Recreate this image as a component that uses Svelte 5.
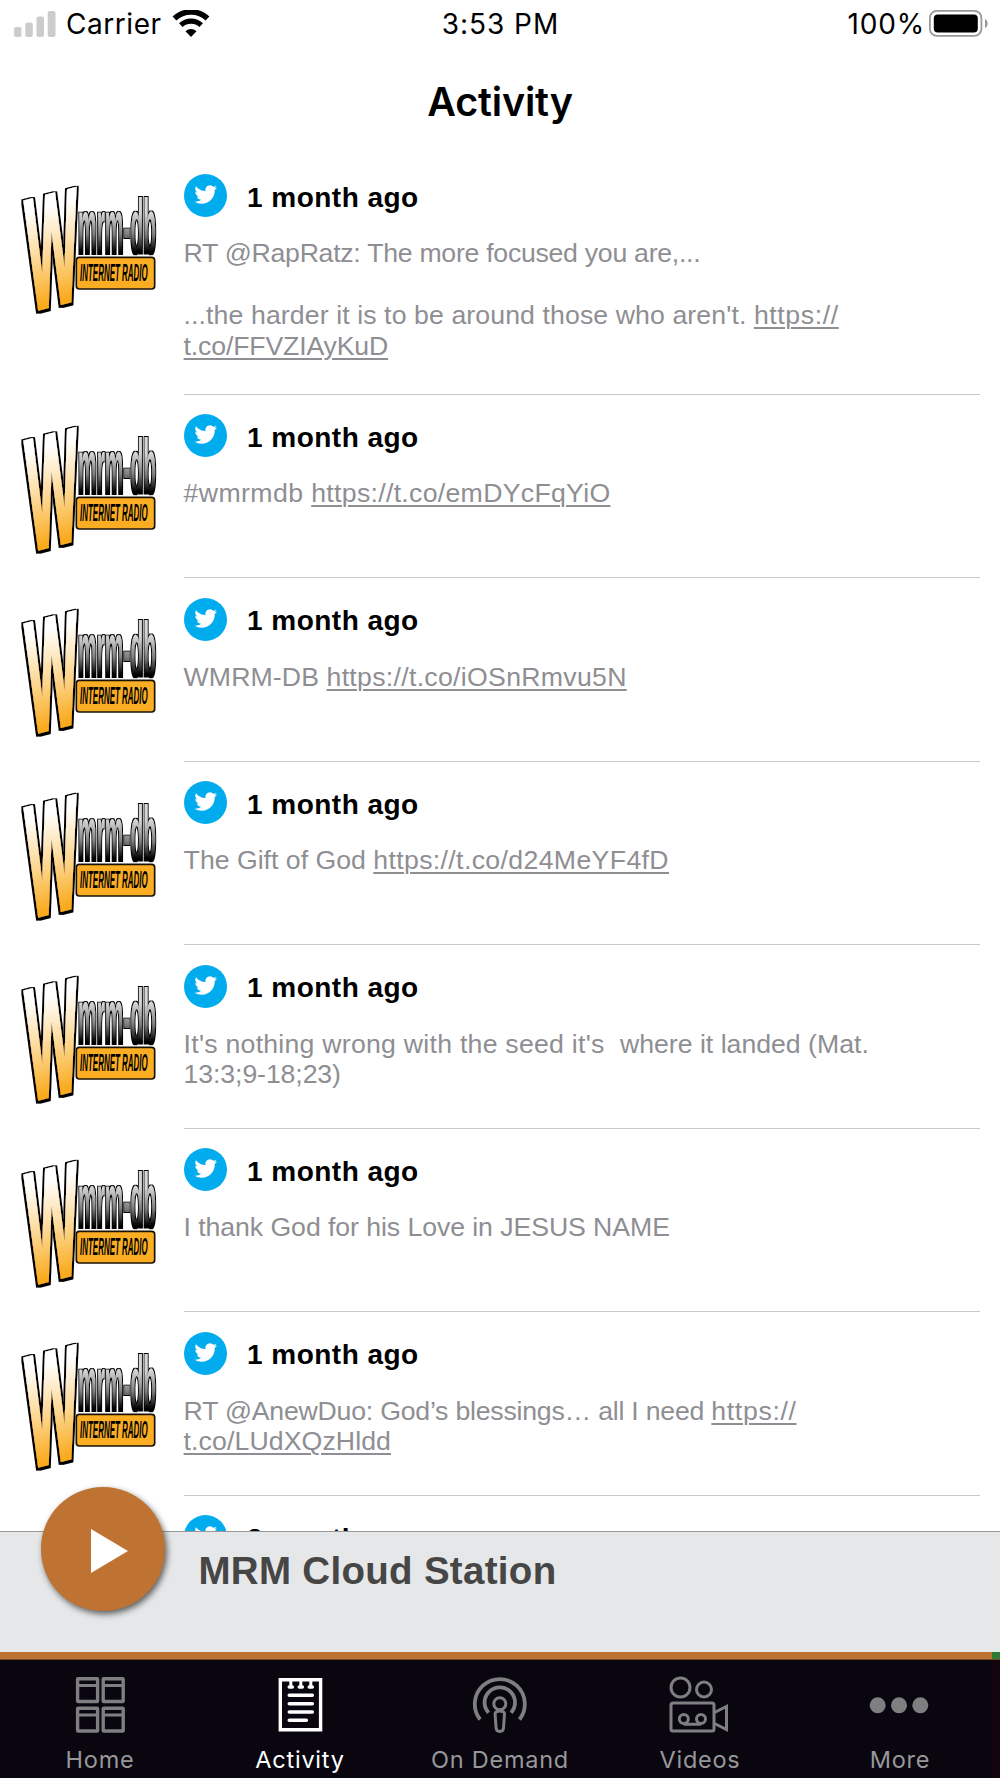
<script lang="ts">
	type Segment = { text: string; link?: boolean; tracking: number };
	type Post = { age: string; lines: Segment[][]; tall?: boolean };

	const posts: Post[] = [
		{
			age: '1 month ago',
			lines: [
				[{ text: 'RT @RapRatz: The more focused you are,...', tracking: -0.27 }],
				[],
				[
					{ text: "...the harder it is to be around those who aren't. ", tracking: 0.1 },
					{ text: 'https://', link: true, tracking: 0.6 }
				],
				[{ text: 't.co/FFVZIAyKuD', link: true, tracking: -0.16 }]
			],
			tall: true
		},
		{
			age: '1 month ago',
			lines: [
				[
					{ text: '#wmrmdb ', tracking: 0.4 },
					{ text: 'https://t.co/emDYcFqYiO', link: true, tracking: 0.3 }
				]
			]
		},
		{
			age: '1 month ago',
			lines: [
				[
					{ text: 'WMRM-DB ', tracking: 0.1 },
					{ text: 'https://t.co/iOSnRmvu5N', link: true, tracking: 0.3 }
				]
			]
		},
		{
			age: '1 month ago',
			lines: [
				[
					{ text: 'The Gift of God ', tracking: 0 },
					{ text: 'https://t.co/d24MeYF4fD', link: true, tracking: 0.36 }
				]
			]
		},
		{
			age: '1 month ago',
			lines: [
				[
					{ text: "It's nothing wrong with the seed it's  ", tracking: 0.25 },
					{ text: 'where it landed (Mat.', tracking: 0 }
				],
				[{ text: '13:3;9-18;23)', tracking: -0.1 }]
			]
		},
		{
			age: '1 month ago',
			lines: [[{ text: 'I thank God for his Love in JESUS NAME', tracking: -0.07 }]]
		},
		{
			age: '1 month ago',
			lines: [
				[
					{ text: 'RT @AnewDuo: God’s blessings… all I need ', tracking: -0.22 },
					{ text: 'https://', link: true, tracking: 0.65 }
				],
				[{ text: 't.co/LUdXQzHldd', link: true, tracking: 0.1 }]
			]
		},
		{ age: '2 months ago', lines: [] }
	];

	const tabs = ['Home', 'Activity', 'On Demand', 'Videos', 'More'];
	let active = $state('Activity');
</script>

{#snippet logo()}
	<svg class="logo" viewBox="0 0 480 495" aria-label="WMRM-DB Internet Radio">
		<g filter="url(#outline-thin)">
			<text transform="translate(204 268) scale(1 2.36)" font-size="100" textLength="234" lengthAdjust="spacingAndGlyphs" fill="url(#steel)">mrm-db</text>
		</g>
		<g filter="url(#outline-thick)">
			<text
				transform="matrix(1.64 -0.42 0.2 4.72 57 437)"
				font-size="100"
				textLength="94"
				lengthAdjust="spacingAndGlyphs"
				fill="url(#gold)"
				stroke="url(#gold)"
				stroke-width="3">W</text
			>
		</g>
		<rect x="199" y="277" width="235" height="95" rx="9" fill="#fbae24" stroke="#1a1206" stroke-width="5" />
		<text class="tagline" x="210" y="348" font-size="73" textLength="203" lengthAdjust="spacingAndGlyphs">INTERNET RADIO</text>
	</svg>
{/snippet}

{#snippet tabIcon(name: string)}
	<svg class="tab-icon" viewBox="0 0 64 60" fill="none" stroke="currentColor" stroke-width="3">
		{#if name === 'Home'}
			{#each [[9.6, 4.7], [35.2, 4.7], [9.6, 34.2], [35.2, 34.2]] as [x, y]}
				<rect {x} {y} width="20" height="22.8" rx="0.6" stroke-width="3.4" />
				<path d="M{x} {y + 6.8}h20" stroke-width="3" />
			{/each}
		{:else if name === 'Activity'}
			<path d="M12.3 5.7h40.3v50H12.3z" stroke-width="3.4" />
			<path d="M22.8 6v6M32.8 6v6M42.8 6v6" stroke-width="3" />
			<path d="M21.3 13h3M31.3 13h3M41.3 13h3M21.3 21.3h23M21.3 29.7h23M21.3 38h23M21.3 46.3h17" stroke-width="3.6" stroke-linecap="round" />
		{:else if name === 'On Demand'}
			<path d="M12.1 45.5a25 25 0 1 1 39.4 0M20.5 38.7a15.2 15.2 0 1 1 22.6 0" stroke-width="3.8" />
			<circle cx="31.8" cy="29.7" r="6" />
			<path d="M27.1 40c0-2 1-3 4.700-3s4.700 1 4.700 3l-1 14c-.2 2.500-1.500 3.500-3.700 3.500s-3.500-1-3.700-3.500z" />
		{:else if name === 'Videos'}
			<circle cx="12.5" cy="13.5" r="9.5" />
			<circle cx="36" cy="15.5" r="7.500" />
			<rect x="3" y="29" width="43" height="28" rx="2" />
			<path d="M46.5 38.5l12-6v23l-12-6M15.8 50.2h17.2" />
			<circle cx="15.8" cy="45" r="4.500" />
			<circle cx="33" cy="45" r="4.500" />
		{:else}
			<g fill="currentColor" stroke="none">
				<circle cx="9.7" cy="31.3" r="8" />
				<circle cx="31" cy="31.3" r="8" />
				<circle cx="52.3" cy="31.3" r="8" />
			</g>
		{/if}
	</svg>
{/snippet}

<svg class="defs" width="0" height="0" aria-hidden="true">
	<defs>
		<linearGradient id="gold" x1="0" y1="0" x2="0" y2="1">
			<stop offset="0.25" stop-color="#fff" />
			<stop offset="0.55" stop-color="#fdd58c" />
			<stop offset="0.8" stop-color="#faaa1e" />
		</linearGradient>
		<linearGradient id="steel" x1="0" y1="0" x2="0" y2="1">
			<stop offset="0.35" stop-color="#d5d5d5" />
			<stop offset="0.58" stop-color="#808080" />
			<stop offset="0.78" stop-color="#000" />
		</linearGradient>
		<filter id="outline-thick" x="-20%" y="-20%" width="140%" height="140%">
			<feMorphology in="SourceAlpha" operator="dilate" radius="6.5" />
			<feOffset dx="-1" dy="2" />
			<feMerge><feMergeNode /><feMergeNode in="SourceGraphic" /></feMerge>
		</filter>
		<filter id="outline-thin" x="-20%" y="-20%" width="140%" height="140%">
			<feMorphology in="SourceAlpha" operator="dilate" radius="2.5" />
			<feMerge><feMergeNode /><feMergeNode in="SourceGraphic" /></feMerge>
		</filter>
	</defs>
</svg>

<div class="screen">
	<div class="status-bar">
		<div class="status-left">
			<svg width="42" height="26" viewBox="0 0 42 26" fill="#ccc">
				<rect x="0" y="16" width="7.5" height="10" rx="2" />
				<rect x="11.3" y="11.5" width="7.5" height="14.5" rx="2" />
				<rect x="22.5" y="5.5" width="7.5" height="20.5" rx="2" />
				<rect x="33.7" y="0" width="7.8" height="26" rx="2" />
			</svg>
			<span class="carrier">Carrier</span>
			<svg width="38" height="27" viewBox="0 0 38 27">
				<path d="M2.5 8.5a24 24 0 0 1 33 0" fill="none" stroke="#000" stroke-width="5.5" />
				<path d="M8.8 15.2a15 15 0 0 1 20.4 0" fill="none" stroke="#000" stroke-width="5.2" />
				<path d="M13.5 21.2a8 8 0 0 1 11 0L19 27z" />
			</svg>
		</div>
		<span class="clock">3:53 PM</span>
		<div class="status-right">
			<span class="percent">100%</span>
			<svg width="59" height="27" viewBox="0 0 59 27">
				<rect x="0.9" y="0.9" width="51.5" height="25" rx="7" fill="none" stroke="#999" stroke-width="1.8" />
				<rect x="4.8" y="4.5" width="44" height="18" rx="4" />
				<path d="M56 9c3.5 1.5 3.5 7.5 0 9z" fill="#999" />
			</svg>
		</div>
	</div>

	<header><h1>Activity</h1></header>

	<main>
		{#each posts as post}
			<article class={{ tall: post.tall }}>
				{@render logo()}
				<div class="post">
					<div class="post-head">
						<svg width="43" height="43" viewBox="0 0 43 43">
							<circle cx="21.5" cy="21.5" r="21.5" fill="#00aced" />
							<path
								transform="translate(10.4 9.2) scale(.945)"
								fill="#fff"
								d="M23.953 4.57a10 10 0 01-2.825.775 4.958 4.958 0 002.163-2.723c-.951.555-2.005.959-3.127 1.184a4.92 4.92 0 00-8.384 4.482C7.69 8.095 4.067 6.13 1.64 3.162a4.822 4.822 0 00-.666 2.475c0 1.71.87 3.213 2.188 4.096a4.904 4.904 0 01-2.228-.616v.06a4.923 4.923 0 003.946 4.827 4.996 4.996 0 01-2.212.085 4.936 4.936 0 004.604 3.417 9.867 9.867 0 01-6.102 2.105c-.39 0-.779-.023-1.17-.067a13.995 13.995 0 007.557 2.209c9.053 0 13.998-7.496 13.998-13.985 0-.21 0-.42-.015-.63A9.935 9.935 0 0024 4.59z"
							/>
						</svg>
						<span>{post.age}</span>
					</div>
					<div class="post-text">
						{#each post.lines as line}
							<p>{#each line as seg}<svelte:element this={seg.link ? 'a' : 'span'} style:letter-spacing="{seg.tracking}px">{seg.text}</svelte:element>{/each}</p>
						{/each}
					</div>
				</div>
			</article>
		{/each}
	</main>

	<section class="player">
		<button class="play" aria-label="Play">
			<svg width="37" height="44" viewBox="0 0 37 44"><path d="M0 0l37 22L0 44z" fill="#fff" /></svg>
		</button>
		<h2>MRM Cloud Station</h2>
	</section>

	<div class="progress"></div>

	<nav>
		{#each tabs as tab}
			<button class={['tab', { active: tab === active }]} onclick={() => (active = tab)}>
				{@render tabIcon(tab)}
				<span>{tab}</span>
			</button>
		{/each}
	</nav>
</div>

<style>
	:global(body) {
		background: #fff;
	}

	.defs {
		position: absolute;
	}

	.screen {
		display: flex;
		flex-direction: column;
		width: 1000px;
		height: 1778px;
		overflow: hidden;
		background: #fff;
		color: #000;
		font-family: Inter, sans-serif;
	}

	.status-bar {
		display: grid;
		grid-template-columns: 1fr auto 1fr;
		height: 46px;
		padding: 0 12px 0 14px;
		align-items: center;
		font-size: 28px;
		line-height: 46px;
	}

	.status-left,
	.status-right {
		display: flex;
		align-items: center;
	}

	.status-right {
		justify-content: flex-end;
		gap: 4px;
	}

	.carrier,
	.clock,
	.percent {
		padding-top: 1px;
	}

	.carrier {
		margin: 0 10.5px 0 10px;
		letter-spacing: 0.55px;
	}

	.clock {
		margin-right: 1px;
		letter-spacing: 0.95px;
	}

	.percent {
		letter-spacing: 0.8px;
	}

	header {
		height: 109px;
		flex: none;
	}

	h1 {
		margin: 0;
		padding-top: 32px;
		font-size: 39.5px;
		line-height: 48px;
		font-weight: 600;
		letter-spacing: -0.2px;
		text-align: center;
	}

	main {
		flex: 1;
		min-height: 0;
		overflow: hidden;
		font-family: 'Liberation Sans', Arial, sans-serif;
	}

	article {
		display: flex;
		height: 183.5px;
		padding: 0 20px 0 10px;
	}

	article.tall {
		height: 239.9px;
	}

	.logo {
		flex: none;
		width: 160px;
		height: 165px;
		margin: 10px 13.6px 0 0;
		overflow: visible;
		font-weight: 700;
	}

	.tagline {
		font-style: italic;
	}

	.post {
		flex: 1;
		box-sizing: border-box;
		padding-top: 19.4px;
		border-bottom: 1px solid #c8c7cc;
	}

	.post-head {
		display: flex;
		align-items: center;
		gap: 20.4px;
		height: 43px;
		font-size: 28px;
		font-weight: 700;
		letter-spacing: 0.48px;
	}

	.post-head span {
		padding-top: 4px;
	}

	.post-text {
		padding-top: 20.8px;
		color: #8e8e93;
		font-size: 26.67px;
		line-height: 30.9px;
		white-space: pre;
	}

	p {
		min-height: 30.9px;
		margin: 0;
	}

	.post-text a {
		text-decoration: underline;
		text-decoration-thickness: 1.5px;
		text-underline-offset: 2.5px;
	}

	.player {
		position: relative;
		box-sizing: border-box;
		height: 121px;
		border-top: 1px solid #999;
		background: #e6e7e8;
		padding: 17px 0 0 198.5px;
	}

	h2 {
		margin: 0;
		color: #464646;
		font: 700 38.5px/44px 'Liberation Sans', Arial, sans-serif;
		letter-spacing: 0.3px;
	}

	.play {
		position: absolute;
		left: 41px;
		top: -45px;
		display: flex;
		align-items: center;
		width: 123.5px;
		height: 123.5px;
		padding: 4px 0 0 50px;
		border: none;
		border-radius: 50%;
		background: #be7332;
		box-shadow: 2px 3px 6px rgba(0, 0, 0, 0.6);
	}

	.progress {
		height: 8px;
		flex: none;
		background: linear-gradient(to right, #be7332 992px, #2f7a35 992px);
		box-shadow: inset 0 -1px #7a481c;
	}

	nav {
		display: grid;
		grid-template-columns: repeat(5, 1fr);
		height: 118px;
		flex: none;
		background: linear-gradient(to right, #09060f 992px, #12050d 992px);
	}

	.tab {
		display: flex;
		flex-direction: column;
		align-items: center;
		padding: 14px 0 0;
		border: none;
		background: none;
		color: #7f7f82;
		font: 400 23.5px/30px Inter, sans-serif;
		letter-spacing: 0.75px;
	}

	.tab span {
		padding-top: 11px;
		color: #98989a;
	}

	.tab.active,
	.tab.active span {
		color: #fff;
	}

	.tab-icon {
		width: 64px;
		height: 60px;
	}
</style>
